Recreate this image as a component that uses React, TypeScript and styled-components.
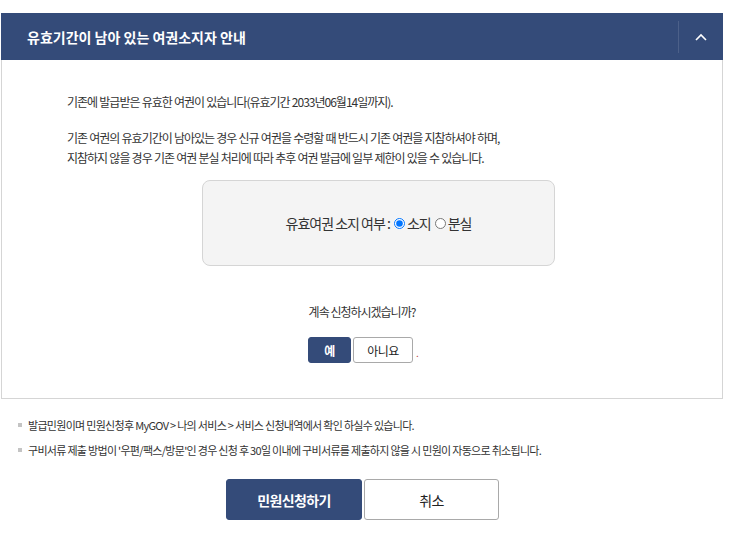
import React from "react";
import styled, { createGlobalStyle } from "styled-components";

const GlobalStyle = createGlobalStyle`
  html, body {
    margin: 0;
    padding: 0;
    background: #fff;
  }
  body {
    font-family: "Noto Sans CJK KR", "Noto Sans", sans-serif;
    color: #222;
  }
`;

const NAVY = "#344b79";

const Page = styled.div`
  width: 722px;
  padding: 13px 10px 0 1px;
`;

const Panel = styled.section`
  border: 1px solid #d5d5d5;
  border-top: none;
`;

const PanelHeader = styled.header`
  display: flex;
  align-items: center;
  height: 47px;
  margin: 0 -1px;
  background: ${NAVY};
`;

const PanelTitle = styled.h2`
  flex: 1;
  margin: 0;
  padding-left: 26px;
  font-size: 14px;
  font-weight: 700;
  letter-spacing: 0;
  color: #fff;
`;

const ToggleButton = styled.button`
  display: flex;
  align-items: center;
  justify-content: center;
  width: 45px;
  height: 32px;
  padding: 0;
  border: none;
  border-left: 1px solid rgba(255, 255, 255, 0.12);
  background: transparent;
  cursor: pointer;
`;

const PanelBody = styled.div`
  height: 338px;
  box-sizing: border-box;
  padding: 32px 0 0;
`;

const Paragraph = styled.p<{ $gap?: number }>`
  margin: 0 0 ${(p) => p.$gap ?? 0}px;
  padding-left: 65px;
  font-size: 12px;
  line-height: 20px;
  letter-spacing: -1px;
  word-spacing: 0.5px;
  color: #333;
`;

const ChoiceBox = styled.div`
  display: flex;
  align-items: center;
  justify-content: center;
  width: 353px;
  height: 86px;
  box-sizing: border-box;
  margin: 12px 0 0 200px;
  border: 1px solid #d5d5d5;
  border-radius: 8px;
  background: #f4f4f4;
  font-size: 14px;
  letter-spacing: -1px;
  color: #333;
`;

const RadioLabel = styled.label`
  display: inline-flex;
  align-items: center;
  cursor: pointer;
`;

const Radio = styled.input`
  width: 11px;
  height: 11px;
  margin: 0 2px 0 4px;
`;

const Question = styled.p`
  margin: 37px 0 0;
  text-align: center;
  font-size: 12px;
  letter-spacing: -1px;
  color: #333;
`;

const ButtonRow = styled.div<{ $top: number }>`
  display: flex;
  justify-content: center;
  align-items: center;
  gap: 2px;
  margin-top: ${(p) => p.$top}px;
`;

const Btn = styled.button<{ $primary?: boolean; $w: number; $h: number; $size: number }>`
  width: ${(p) => p.$w}px;
  height: ${(p) => p.$h}px;
  box-sizing: border-box;
  padding: 0;
  border: 1px solid ${(p) => (p.$primary ? NAVY : "#a9a9a9")};
  border-radius: 3px;
  background: ${(p) => (p.$primary ? NAVY : "#fff")};
  color: ${(p) => (p.$primary ? "#fff" : "#222")};
  font-family: inherit;
  font-size: ${(p) => p.$size}px;
  font-weight: ${(p) => (p.$primary ? 700 : 400)};
  letter-spacing: -0.6px;
  cursor: pointer;
`;

const Dot = styled.span`
  width: 0;
  margin-left: 1px;
  font-size: 10px;
  color: #b44;
  transform: translateY(2px);
`;

const Notes = styled.ul`
  margin: 13px 0 0;
  padding: 0 0 0 17px;
  list-style: none;
`;

const Note = styled.li`
  display: flex;
  align-items: center;
  height: 25px;
  font-size: 11px;
  letter-spacing: -0.7px;
  color: #333;

  &::before {
    content: "";
    width: 4px;
    height: 4px;
    margin-right: 6px;
    background: #c4c4c4;
  }
`;

const Footer = styled.div`
  margin-top: 17px;
  margin-left: 1px;
`;

export default function App() {
  return (
    <>
      <GlobalStyle />
      <Page>
        <Panel>
          <PanelHeader>
            <PanelTitle>유효기간이 남아 있는 여권소지자 안내</PanelTitle>
            <ToggleButton aria-label="접기">
              <svg width="12" height="8" viewBox="0 0 12 8">
                <path d="M1 7 L6 2 L11 7" fill="none" stroke="#fff" strokeWidth="1.6" />
              </svg>
            </ToggleButton>
          </PanelHeader>
          <PanelBody>
            <Paragraph $gap={16}>기존에 발급받은 유효한 여권이 있습니다(유효기간 2033년06월14일까지).</Paragraph>
            <Paragraph>기존 여권의 유효기간이 남아있는 경우 신규 여권을 수령할 때 반드시 기존 여권을 지참하셔야 하며,</Paragraph>
            <Paragraph>지참하지 않을 경우 기존 여권 분실 처리에 따라 추후 여권 발급에 일부 제한이 있을 수 있습니다.</Paragraph>
            <ChoiceBox>
              유효여권 소지 여부 :
              <RadioLabel>
                <Radio type="radio" name="hold" defaultChecked />
                소지
              </RadioLabel>
              <RadioLabel>
                <Radio type="radio" name="hold" />
                분실
              </RadioLabel>
            </ChoiceBox>
            <Question>계속 신청하시겠습니까?</Question>
            <ButtonRow $top={17}>
              <Btn $primary $w={43} $h={26} $size={12}>예</Btn>
              <Btn $w={60} $h={26} $size={12}>아니요</Btn>
              <Dot>.</Dot>
            </ButtonRow>
          </PanelBody>
        </Panel>
        <Notes>
          <Note>발급민원이며 민원신청후 MyGOV &gt; 나의 서비스 &gt; 서비스 신청내역에서 확인 하실수 있습니다.</Note>
          <Note>구비서류 제출 방법이 '우편/팩스/방문'인 경우 신청 후 30일 이내에 구비서류를 제출하지 않을 시 민원이 자동으로 취소됩니다.</Note>
        </Notes>
        <Footer>
          <ButtonRow $top={0}>
            <Btn $primary $w={136} $h={41} $size={14}>민원신청하기</Btn>
            <Btn $w={135} $h={41} $size={14}>취소</Btn>
          </ButtonRow>
        </Footer>
      </Page>
    </>
  );
}
